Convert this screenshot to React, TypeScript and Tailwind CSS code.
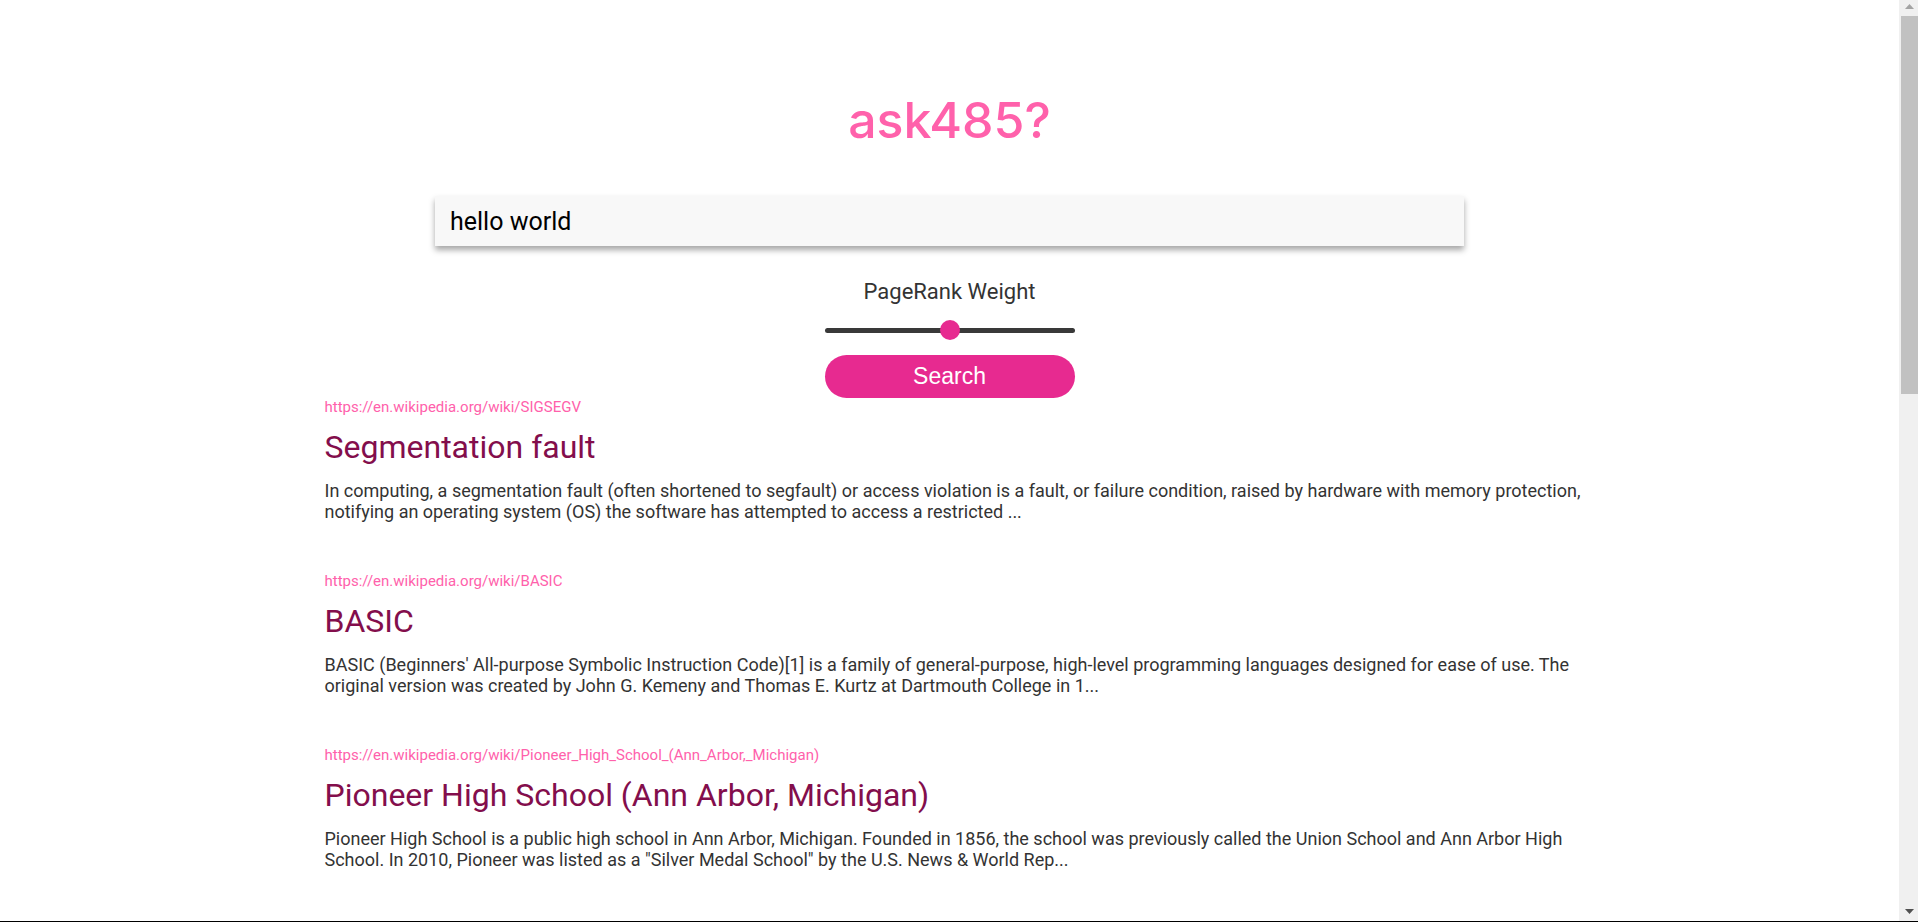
import { useState } from "react";

const results = [
  {
    url: "https://en.wikipedia.org/wiki/SIGSEGV",
    title: "Segmentation fault",
    summary:
      "In computing, a segmentation fault (often shortened to segfault) or access violation is a fault, or failure condition, raised by hardware with memory protection, notifying an operating system (OS) the software has attempted to access a restricted ...",
  },
  {
    url: "https://en.wikipedia.org/wiki/BASIC",
    title: "BASIC",
    summary:
      "BASIC (Beginners' All-purpose Symbolic Instruction Code)[1] is a family of general-purpose, high-level programming languages designed for ease of use. The original version was created by John G. Kemeny and Thomas E. Kurtz at Dartmouth College in 1...",
  },
  {
    url: "https://en.wikipedia.org/wiki/Pioneer_High_School_(Ann_Arbor,_Michigan)",
    title: "Pioneer High School (Ann Arbor, Michigan)",
    summary:
      'Pioneer High School is a public high school in Ann Arbor, Michigan. Founded in 1856, the school was previously called the Union School and Ann Arbor High School. In 2010, Pioneer was listed as a "Silver Medal School" by the U.S. News & World Rep...',
  },
];

function SearchForm() {
  const [query, setQuery] = useState("hello world");
  const [weight, setWeight] = useState("0.5");
  return (
    <form className="flex flex-col items-center" onSubmit={(e) => e.preventDefault()}>
      <input
        type="text"
        aria-label="Search query"
        value={query}
        onChange={(e) => setQuery(e.target.value)}
        className="h-[50px] w-full max-w-[1029px] bg-[#f8f8f8] px-[15px] text-[25px] text-black shadow-[0_4px_6px_rgba(0,0,0,0.35)] outline-none"
      />
      <label htmlFor="weight" className="mt-[33px] text-[22px] leading-[26px] text-[#333]">
        PageRank Weight
      </label>
      <input
        id="weight"
        type="range"
        min="0"
        max="1"
        step="0.01"
        value={weight}
        onChange={(e) => setWeight(e.target.value)}
        className="mt-[15px] h-5 w-[250px] appearance-none bg-transparent [&::-webkit-slider-runnable-track]:h-[5px] [&::-webkit-slider-runnable-track]:rounded-full [&::-webkit-slider-runnable-track]:bg-[#393939] [&::-webkit-slider-thumb]:-mt-2 [&::-webkit-slider-thumb]:size-5 [&::-webkit-slider-thumb]:appearance-none [&::-webkit-slider-thumb]:rounded-full [&::-webkit-slider-thumb]:bg-[#e72a90]"
      />
      <button
        type="submit"
        className="mt-[15px] h-[43px] w-[250px] rounded-full bg-[#e72a90] font-['Liberation_Sans',sans-serif] text-[23px] leading-none text-white"
      >
        Search
      </button>
    </form>
  );
}

function Scrollbar() {
  return (
    <div aria-hidden="true" className="flex w-[19px] shrink-0 flex-col bg-[#f0f0f0] pl-0.5">
      <div className="flex h-4 justify-center pt-1">
        <svg width="9" height="5" viewBox="0 0 9 5" className="fill-[#a3a3a3]">
          <path d="M4.5 0 9 5H0z" />
        </svg>
      </div>
      <div className="flex-1">
        <div className="h-[42.3%] bg-[#c1c1c1]" />
      </div>
      <div className="flex h-3 justify-center">
        <svg width="9" height="5" viewBox="0 0 9 5" className="fill-[#505050]">
          <path d="M0 0h9L4.5 5z" />
        </svg>
      </div>
    </div>
  );
}

export default function App() {
  return (
    <div className="flex h-screen border-b border-black bg-white font-[Roboto,sans-serif]">
      <main className="min-w-0 flex-1 overflow-y-auto [scrollbar-width:none]">
        <div className="mx-auto max-w-[1250px]">
          <h1 className="pt-[88px] pb-[44px] text-center font-[Inter,sans-serif] text-[50px] leading-[64px] font-medium text-[#ff61ab]">
            ask485?
          </h1>
          <SearchForm />
          <section aria-label="Results" className="-mr-4">
            {results.map((r) => (
              <article key={r.url} className="mb-[50px]">
                <a href={r.url} className="block text-[15px] leading-[18px] text-[#ff61ab]">
                  {r.url}
                </a>
                <h2 className="pt-3 pb-3.5 text-[32px] leading-[38px] text-[#830e4c]">{r.title}</h2>
                <p className="text-[18px] leading-[21px] text-[#333]">{r.summary}</p>
              </article>
            ))}
          </section>
        </div>
      </main>
      <Scrollbar />
    </div>
  );
}
